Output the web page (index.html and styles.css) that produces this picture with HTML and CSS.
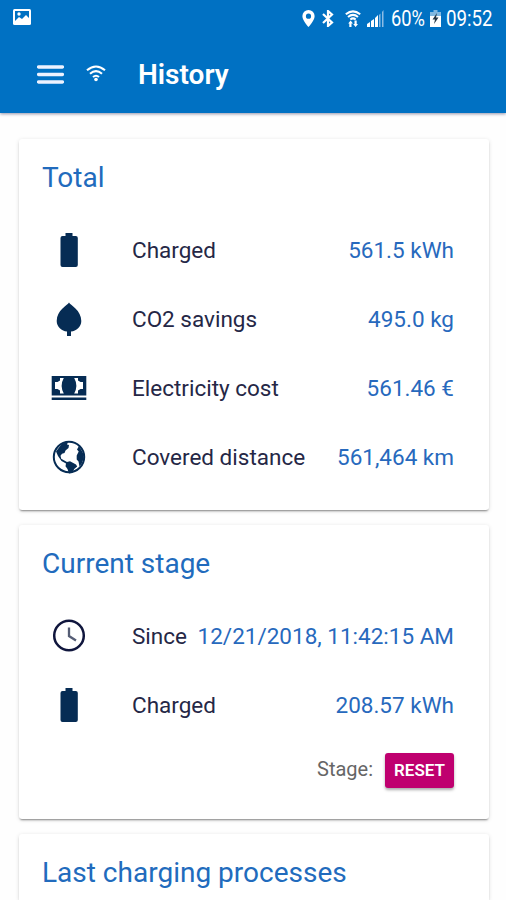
FILE: index.html
```html
<!DOCTYPE html>
<html lang="en">
<head>
<meta charset="utf-8">
<title>History</title>
<link rel="stylesheet" href="styles.css">
</head>
<body>
<header class="header">
  <div class="status">
    <svg class="picture" width="18" height="16" viewBox="0 0 18 16"><rect width="18" height="16" rx="1.5" fill="#fff"/><path d="M2 2h14v7l-3-3-4 4-3-2-4 4z" fill="#0071c3"/><circle cx="6" cy="5" r="1.7" fill="#fff"/></svg>
    <div class="signals">
      <svg width="13" height="17" viewBox="0 0 13 17"><path d="M6.5 0A6.1 6.1 0 0 0 .4 6.2C.4 10.600 6.500 17 6.500 17s6.100-6.400 6.100-10.800A6.100 6.100 0 0 0 6.500 0zm0 3.600a2.600 2.600 0 1 1 0 5.200 2.600 2.600 0 0 1 0-5.200z" fill="#fff"/></svg>
      <svg class="bluetooth" width="12" height="17" viewBox="0 0 12 17"><path d="M1 4l9 8.500L6 16V1l4 3.500L1 13" fill="none" stroke="#fff" stroke-width="2.200"/></svg>
      <svg class="wlan" width="16" height="18" viewBox="0 0 16 18"><path d="M.8 4.300Q8-1.500 15.200 4.300M3 7Q8 2.800 13 7M5.300 9.500Q8 7.300 10.700 9.500" fill="none" stroke="#fff" stroke-width="2"/><path d="M3.200 13.500l2.400-3 2.400 3H6.500V17H4.300v-3.500zM8.200 14h1.300v-3.500h2.200V14H13l-2.400 3z" fill="#fff"/></svg>
      <svg class="cell" width="17" height="17" viewBox="0 0 17 17"><path d="M0 17v-3l3-2v5zM4 17v-6l3-2v8zM8 17V8l3-3v12z" fill="#fff"/><path d="M12 17V5l1.500-1.500V17zM15 17V2l1.500-2v17z" fill="#8cbce5"/></svg>
      <span class="percent">60%</span>
      <svg class="charge" width="11" height="17" viewBox="0 0 11 17"><path d="M3.500 0h4v2H11v5H0V2h3.500z" fill="#80b8e1"/><path d="M0 6h11v11H0z" fill="#fff"/><path d="M7 3L2.500 9.500H5L4 14l4.500-6.500H6z" fill="#253746"/></svg>
      <span class="time">09:52</span>
    </div>
  </div>
  <div class="toolbar">
    <svg class="menu" width="27" height="19" viewBox="0 0 27 19"><path d="M1.500 2h24M1.500 9.500h24M1.500 17h24" stroke="#edf2ff" stroke-width="3.300" stroke-linecap="round"/></svg>
    <svg class="wifi" width="20" height="17" viewBox="0 0 20 17"><path d="M1 5.300Q10-2.300 19 5.300M4 8.700Q10 3.500 16 8.700M7 12Q10 9.500 13 12" fill="none" stroke="#fff" stroke-width="2.100"/><circle cx="10" cy="14.500" r="1.800" fill="#fff"/></svg>
    <h1 class="title">History</h1>
  </div>
</header>
<main class="content">
  <section class="card">
    <h2 class="heading">Total</h2>
    <div class="row"><svg class="icon" viewBox="0 0 36 36"><path d="M14.500 1h7v3h3.300a2 2 0 0 1 2 2v27a2 2 0 0 1-2 2H11.500a2 2 0 0 1-2-2V6a2 2 0 0 1 2-2h3z"/></svg><span class="label">Charged</span><span class="value">561.5 kWh</span></div>
    <div class="row"><svg class="icon" viewBox="0 0 36 36"><path d="M18 1.500c1.500 3 12.300 7.500 12.300 18.500 0 6-5 10-10.300 10.500V35h-4v-4.500C10.700 30 5.700 26 5.700 20 5.700 9 16.500 4.500 18 1.500z"/></svg><span class="label">CO2 savings</span><span class="value">495.0 kg</span></div>
    <div class="row"><svg class="icon" viewBox="0 0 36 36"><path fill-rule="evenodd" d="M.7 6h34.600v19.500H.7zM9 8v2.500L6.500 12H4v7h2.500L9 20.500v3h3.800Q8.500 15.700 12.800 8zM27 8v2.500l2.500 1.500H32v7h-2.500L27 20.500v3h-3.800Q27.500 15.700 23.200 8zM.7 27.600h34.600v2.400H.7z"/></svg><span class="label">Electricity cost</span><span class="value">561.46 €</span></div>
    <div class="row"><svg class="icon" viewBox="0 0 36 36"><circle cx="18" cy="18" r="15.200" fill="none" stroke="#062c54" stroke-width="2"/><path d="M11 4.500l6-1.500-1 2.500 2 .5-.5 3-3 2.500-1 2.500-2.500.8-1.500 2 .7 3 5.800 3.200 3-.8 6 3.300 1.200 2-3 2.500-2 4-3.200.5-1.500-4.500-2-2.700.5-2.800-4.500-2.500-3.500-5-2-4.500zM28 7l4 7 .8 5-2 5.500-2.300 3-1-5-1.800-2v-4l2-4-1.700-2z"/></svg><span class="label">Covered distance</span><span class="value">561,464 km</span></div>
  </section>
  <section class="card stage">
    <h2 class="heading">Current stage</h2>
    <div class="row"><svg class="icon" viewBox="0 0 36 36"><circle cx="18" cy="17.500" r="14.800" fill="none" stroke="#10163d" stroke-width="2.500"/><path d="M18 9.500V18l7 4.500" fill="none" stroke="#555d75" stroke-width="2.300"/></svg><span class="label">Since</span><span class="value">12/21/2018, 11:42:15 AM</span></div>
    <div class="row"><svg class="icon" viewBox="0 0 36 36"><path d="M14.500 1h7v3h3.300a2 2 0 0 1 2 2v27a2 2 0 0 1-2 2H11.500a2 2 0 0 1-2-2V6a2 2 0 0 1 2-2h3z"/></svg><span class="label">Charged</span><span class="value">208.57 kWh</span></div>
    <div class="actions"><span class="caption">Stage:</span><button class="reset">RESET</button></div>
  </section>
  <section class="card last">
    <h2 class="heading">Last charging processes</h2>
  </section>
</main>
</body>
</html>
```
FILE: styles.css
```css
* { box-sizing: border-box; }
html, body { margin: 0; height: 100%; overflow: hidden; }
body { background: #fefefe; font-family: Roboto, "Liberation Sans", sans-serif; }
svg { display: block; flex: none; }
.header { height: 113px; background: #0071c3; color: #fff; box-shadow: 0 1px 3px #9292a8; }
.status { height: 37px; padding: 0 12px 0 13px; display: flex; align-items: center; justify-content: space-between; }
.picture { margin-bottom: 3px; }
.signals { display: flex; align-items: center; font-size: 22px; line-height: 37px; }
.bluetooth { margin-left: 7px; }
.wlan { margin-left: 11px; }
.cell { margin-left: 6px; }
.percent { width: 34px; margin-left: 7px; transform: scaleX(.83); transform-origin: left; }
.charge { margin-left: 5px; }
.time { width: 47px; margin-left: 5px; margin-right: 1px; transform: scaleX(.85); transform-origin: left; }
.toolbar { height: 74px; padding-left: 37px; display: flex; align-items: center; }
.wifi { margin-left: 22px; margin-bottom: 2px; }
.title { margin: 0 0 0 32px; font-size: 28px; font-weight: 600; line-height: 36px; letter-spacing: 0; padding-top: 1px; }
.content { padding: 26px 17px 0 19px; }
.card { height: 371px; padding: 0 35px 0 23px; margin-bottom: 15px; border-radius: 3px; background: #fff; box-shadow: 0 2px 2px -1px #888, 0 1px 4px #ddd; }
.stage { height: 294px; }
.last { height: 66px; margin-bottom: 0; border-radius: 3px 3px 0 0; }
.heading { margin: 0; padding-top: 20px; height: 76px; font-size: 28px; line-height: 38px; font-weight: 400; color: #216bbd; letter-spacing: 0; white-space: nowrap; }
.last .heading { height: 66px; }
.row { height: 69px; display: flex; align-items: center; font-size: 22.5px; font-weight: 370; line-height: 30px; white-space: nowrap; }
.icon { width: 36px; height: 36px; margin: 0 44px 0 9px; fill: #062c54; }
.label { color: #252746; margin-left: 1px; }
.value { color: #2769bd; margin-left: auto; }
.actions { height: 62px; display: flex; align-items: center; justify-content: flex-end; }
.caption { color: #666; font-size: 20px; padding-bottom: 2px; }
.reset { width: 69px; height: 35px; margin-left: 12px; padding: 0; border: 0; border-radius: 3px; background: #bf006f; color: #fff; font: 600 17px Roboto, sans-serif; box-shadow: 0 2px 3px #aaa; }
```
